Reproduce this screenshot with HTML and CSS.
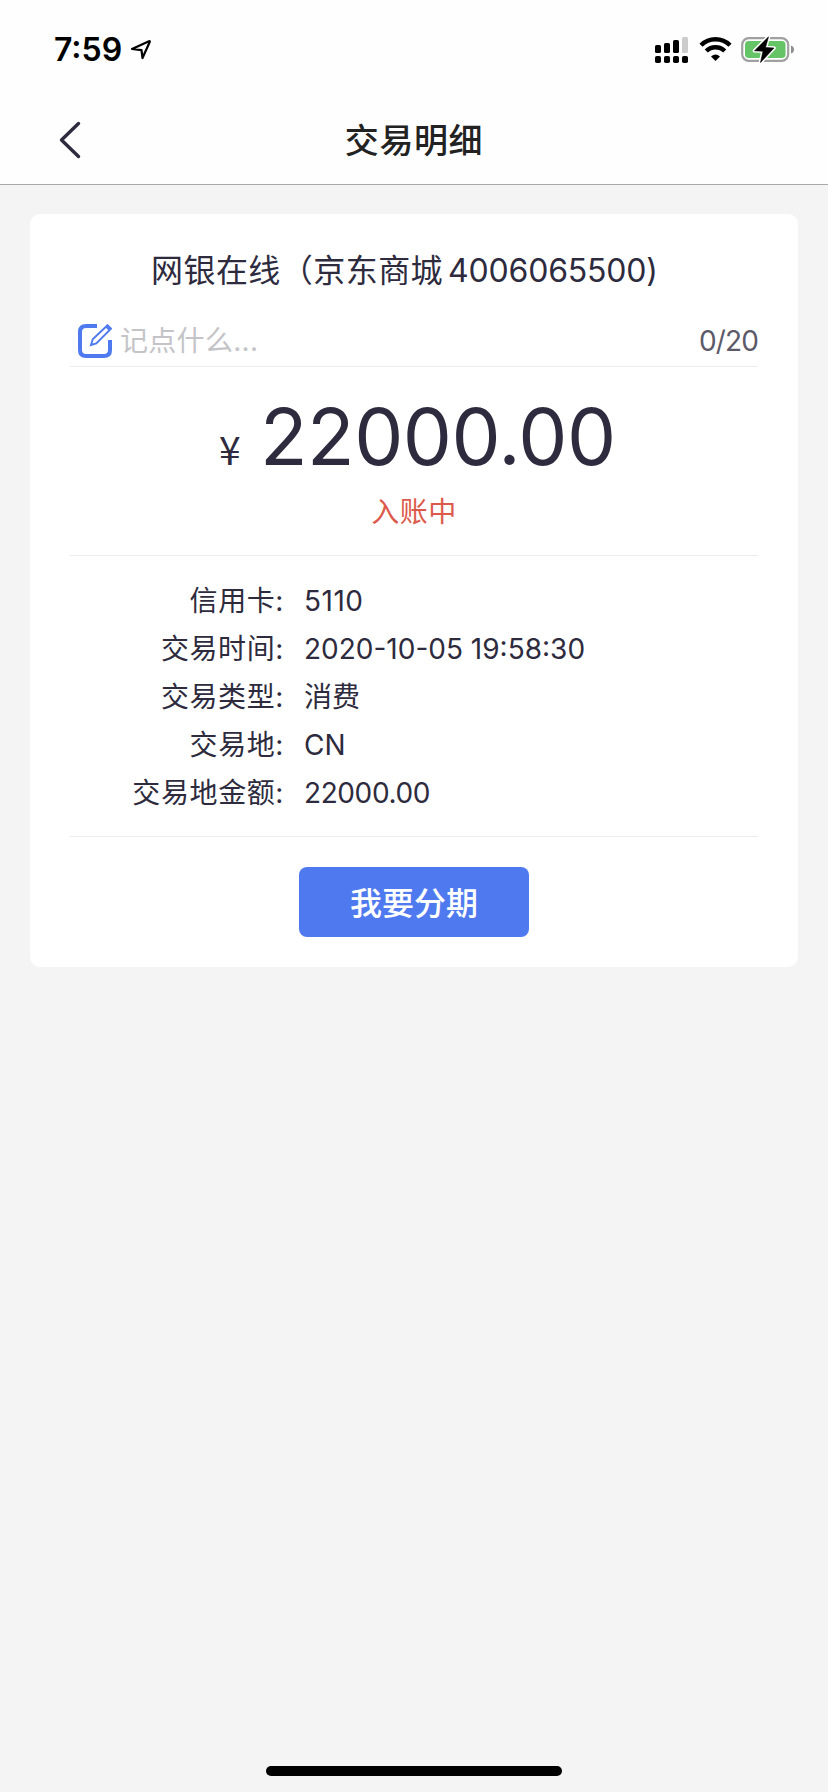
FILE: index.html
```html
<!DOCTYPE html>
<html lang="zh-CN">
<head>
<meta charset="utf-8">
<title>交易明细</title>
<link rel="stylesheet" href="styles.css">
</head>
<body>
<div class="screen">
  <div class="status-bar">
    <span class="time">7:59</span>
    <svg class="location" width="22" height="22" viewBox="0 0 22 22"><path d="M2 10 L19 2.2 Q20.2 1.8 19.7 3 L12.5 19 L11.5 11.2 Z" fill="none" stroke="#000" stroke-width="2.2" stroke-linejoin="round"/></svg>
    <svg class="indicators" width="142" height="28" viewBox="0 0 142 28">
      <rect x="0" y="9" width="6" height="8" rx="1.6"/>
      <rect x="9" y="7" width="6" height="10" rx="1.6"/>
      <rect x="18" y="4" width="6" height="13" rx="1.6"/>
      <rect x="27" y="1" width="6" height="16" rx="1.6" fill="#ccc"/>
      <rect x="0" y="20" width="6" height="7" rx="1.8"/>
      <rect x="9" y="20" width="6" height="7" rx="1.8"/>
      <rect x="18" y="20" width="6" height="7" rx="1.8"/>
      <rect x="27" y="20" width="6" height="7" rx="1.8"/>
      <g fill="none" stroke="#000" stroke-width="4.4">
        <path d="M46 9.2 A20.5 20.5 0 0 1 75 9.2"/>
        <path d="M51.3 15 A13 13 0 0 1 69.700 15"/>
      </g>
      <path d="M60.500 25 L56 20.400 Q60.500 16.700 65 20.400 Z"/>
      <rect x="87.2" y="2.200" width="46" height="22.600" rx="6.500" fill="none" stroke="#a0a0a0" stroke-width="2.200"/>
      <rect x="90" y="5" width="40.500" height="17" rx="3.800" fill="#65c466"/>
      <path d="M136 9.500 Q139 10.500 139 13.500 Q139 16.500 136 17.500 Z" fill="#8e8e8e"/>
      <path d="M113.500 .8 L99.500 14.800 L108 15.200 L105.500 26.500 L119 12 L110.500 11.500 Z" stroke="#fff" stroke-width="3.600" stroke-linejoin="round"/>
      <path d="M113.500 .8 L99.500 14.800 L108 15.200 L105.500 26.500 L119 12 L110.500 11.500 Z" stroke="#000" stroke-width=".6"/>
    </svg>
  </div>
  <div class="nav">
    <svg class="back" width="24" height="40" viewBox="0 0 24 40"><path d="M20.500 3.500 L3.500 20 L20.500 36.500" fill="none" stroke="#2d2b3d" stroke-width="3.400" stroke-linecap="round" stroke-linejoin="round"/></svg>
    <h1 class="title">交易明细</h1>
  </div>
  <main class="card">
    <h2 class="merchant">网银在线（京东商城<span class="phone">4006065500)</span></h2>
    <div class="note">
      <svg class="edit" width="34" height="34" viewBox="0 0 34 34" fill="none" stroke="#4f7aef">
        <path d="M19 2 H8 Q2 2 2 8 V26 Q2 32 8 32 H26 Q32 32 32 26 V16" stroke-width="4"/>
        <path d="M13 21 L14.700 15.300 L29.500 1.200 L33 4.700 L18.300 19.300 Z M28 2.500 L31.600 6" stroke-width="1.900"/>
      </svg>
      <span class="placeholder">记点什么...</span>
      <span class="counter">0/20</span>
    </div>
    <section class="summary">
      <div class="amount"><span class="yen">¥</span><span class="value">22000.00</span></div>
      <div class="state">入账中</div>
    </section>
    <dl class="details">
      <dt>信用卡:</dt><dd class="card-number">5110</dd>
      <dt>交易时间:</dt><dd>2020-10-05 19:58:30</dd>
      <dt>交易类型:</dt><dd>消费</dd>
      <dt>交易地:</dt><dd>CN</dd>
      <dt>交易地金额:</dt><dd class="local-amount">22000.00</dd>
    </dl>
    <button class="installment">我要分期</button>
  </main>
  <div class="home-bar"></div>
</div>
</body>
</html>
```
FILE: styles.css
```css
* { box-sizing: border-box; margin: 0; padding: 0; }
body {
  background: #f4f4f4;
  color: #2d2b3d;
  font-family: Inter, "Noto Sans CJK SC", sans-serif;
  font-size: 28px;
}
svg { display: block; flex: none; }
.screen { width: 828px; height: 1792px; display: flex; flex-direction: column; }
.status-bar {
  height: 96px;
  padding: 3px 31px 0 54px;
  background: #fefefe;
  display: flex;
  align-items: center;
  color: #000;
}
.time { width: 76px; font-size: 32px; font-weight: 600; white-space: nowrap; }
.indicators { margin-left: auto; }
.nav {
  height: 89px;
  padding: 0 58px;
  background: #fefefe;
  border-bottom: 1px solid #a9a9a9;
  display: grid;
  grid-template-columns: 24px 1fr 24px;
  align-items: center;
}
.title { padding-top: 2px; font-size: 34px; font-weight: 500; letter-spacing: .6px; text-align: center; color: #222; line-height: 86px; }
.card {
  width: 768px;
  height: 753px;
  margin: 29px 30px 0;
  padding: 0 40px;
  border-radius: 10px;
  background: #fff;
  display: flex;
  flex-direction: column;
}
.merchant { height: 110px; padding-left: 81px; font-size: 32px; font-weight: 400; line-height: 113px; letter-spacing: .45px; white-space: nowrap; }
.phone { margin-left: 5px; letter-spacing: -.2px; }
.note { height: 43px; padding-left: 8px; border-bottom: 1px solid #ececec; display: flex; align-items: flex-start; line-height: 35px; }
.placeholder { margin-left: 8px; color: #c4c4c8; letter-spacing: .3px; }
.counter { margin-left: auto; color: #5c5a68; letter-spacing: -.9px; }
.summary { height: 189px; border-bottom: 1px solid #ececec; }
.amount { height: 127px; padding-left: 149px; display: flex; align-items: baseline; line-height: 140px; }
.yen { width: 41px; font-family: "Noto Sans CJK SC", sans-serif; font-size: 39px; }
.value { font-size: 78px; letter-spacing: -.5px; }
.state { height: 40px; line-height: 36px; text-align: center; color: #dc5a4b; letter-spacing: .5px; }
.details {
  height: 281px;
  padding-top: 21px;
  border-bottom: 1px solid #ececec;
  display: grid;
  grid-template-columns: 214px 1fr;
  grid-auto-rows: 48px;
  column-gap: 20px;
  line-height: 48px;
}
.details dt { text-align: right; letter-spacing: .6px; }
.card-number { letter-spacing: .5px; }
.local-amount { letter-spacing: -.4px; }
.installment {
  width: 230px;
  height: 70px;
  margin: 30px auto 0;
  border: 0;
  border-radius: 8px;
  background: #4f7aef;
  color: #fff;
  font: 500 32px/68px "Noto Sans CJK SC", sans-serif;
  padding-bottom: 2px;
}
.home-bar { width: 296px; height: 10px; margin: auto auto 16px; border-radius: 5px; background: #000; }
```
